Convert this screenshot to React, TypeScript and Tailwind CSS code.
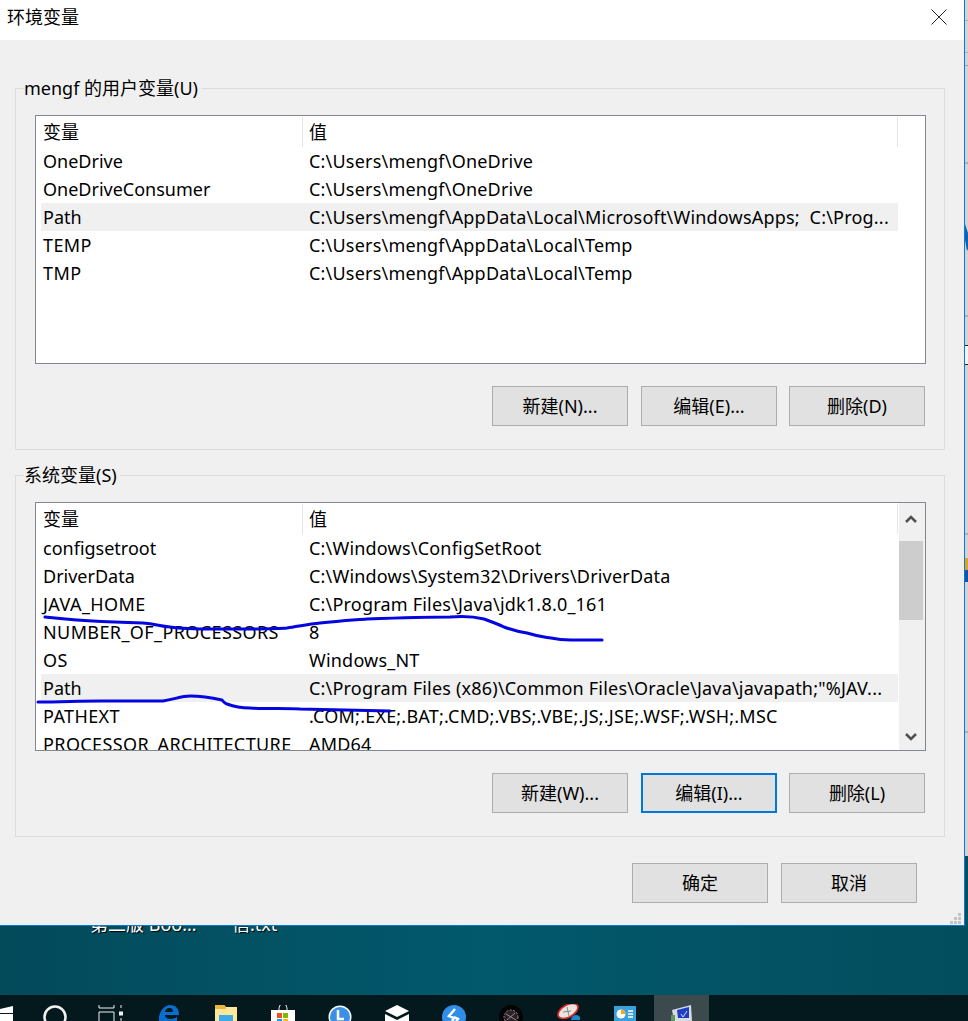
const font = { fontFamily: '"Noto Sans", "Noto Sans CJK SC", sans-serif' }

const userVars = [
  ['OneDrive', 'C:\\Users\\mengf\\OneDrive'],
  ['OneDriveConsumer', 'C:\\Users\\mengf\\OneDrive'],
  ['Path', 'C:\\Users\\mengf\\AppData\\Local\\Microsoft\\WindowsApps;  C:\\Prog...'],
  ['TEMP', 'C:\\Users\\mengf\\AppData\\Local\\Temp'],
  ['TMP', 'C:\\Users\\mengf\\AppData\\Local\\Temp'],
]

const systemVars = [
  ['configsetroot', 'C:\\Windows\\ConfigSetRoot'],
  ['DriverData', 'C:\\Windows\\System32\\Drivers\\DriverData'],
  ['JAVA_HOME', 'C:\\Program Files\\Java\\jdk1.8.0_161'],
  ['NUMBER_OF_PROCESSORS', '8'],
  ['OS', 'Windows_NT'],
  ['Path', 'C:\\Program Files (x86)\\Common Files\\Oracle\\Java\\javapath;"%JAV...'],
  ['PATHEXT', '.COM;.EXE;.BAT;.CMD;.VBS;.VBE;.JS;.JSE;.WSF;.WSH;.MSC'],
  ['PROCESSOR_ARCHITECTURE', 'AMD64'],
]

function VarList({ rows, scroll }: { rows: string[][]; scroll?: boolean }) {
  return (
    <div className="flex h-[249px] w-[891px] overflow-hidden border border-[#828790] bg-white">
      <div className="w-[863px] shrink-0 pl-[5px]">
        <div className="flex h-[31px] items-center">
          <div className="h-[30px] w-[262px] border-r border-[#e5e5e5] pl-[2px] leading-[30px]">变量</div>
          <div className="h-[30px] w-[595px] border-r border-[#e5e5e5] pl-[6px] leading-[30px]">值</div>
        </div>
        {rows.map(([name, value]) => (
          <div
            key={name}
            className={`flex h-[28px] w-[857px] items-center whitespace-pre ${name === 'Path' ? 'bg-[#f0f0f0]' : ''}`}
          >
            <div className={`w-[261px] shrink-0 pl-[2px] ${name === name.toUpperCase() ? 'tracking-[0.4px]' : ''}`}>{name}</div>
            <div className="pl-[7px] tracking-[0.2px]">{value}</div>
          </div>
        ))}
      </div>
      {scroll && (
        <div className="flex w-[26px] flex-col items-center bg-[#f0f0f0]">
          <div className="flex h-[38px] w-full justify-center pr-[2px] pt-[12px]">
            <svg width="12" height="8" viewBox="0 0 12 8" fill="none" stroke="#505050" strokeWidth="2.5">
              <path d="M1 7 6 2l5 5" />
            </svg>
          </div>
          <div className="mr-[2px] h-[79px] w-[24px] bg-[#cdcdcd]" />
          <div className="flex h-[130px] w-full items-end justify-center pb-[9px] pr-[2px]">
            <svg width="12" height="8" viewBox="0 0 12 8" fill="none" stroke="#505050" strokeWidth="2.5">
              <path d="M1 1l5 5 5-5" />
            </svg>
          </div>
        </div>
      )}
    </div>
  )
}

function Btn({ label, focused }: { label: string; focused?: boolean }) {
  return (
    <button
      className={`h-[40px] w-[136px] bg-[#e1e1e1] text-center ${focused ? 'border-2 border-[#0078d7]' : 'border border-[#adadad]'}`}
    >
      {label}
    </button>
  )
}

function Group({ title, children }: { title: string; children: React.ReactNode }) {
  return (
    <fieldset className="mx-[15px] h-[374px] w-[930px] border border-[#dcdcdc] pl-[19px]">
      <legend className="-ml-[11px] h-[24px] pr-[3px] leading-[24px]">{title}</legend>
      <div className="mt-[15px]">{children}</div>
    </fieldset>
  )
}

function TaskIcon({ active, children }: { active?: boolean; children: React.ReactNode }) {
  return (
    <div className={`mx-px flex h-[26px] w-[55px] shrink-0 justify-center pt-[10px] ${active ? 'bg-[#3c4a4d]' : ''}`}>
      {children}
    </div>
  )
}

function Taskbar() {
  return (
    <div className="flex h-[26px] overflow-hidden bg-[#04191e]">
      <div className="h-[26px] w-[26px] shrink-0 pt-[11px]">
        <svg width="13" height="15" viewBox="0 0 13 15" fill="#fff">
          <path d="M0 3 13 0v7H0zM0 8h13v7H0z" />
        </svg>
      </div>
      <TaskIcon>
        <svg width="24" height="24" viewBox="0 0 24 24" fill="none" stroke="#f2f2f2" strokeWidth="2.5">
          <circle cx="12" cy="12" r="10.5" />
        </svg>
      </TaskIcon>
      <TaskIcon>
        <svg width="26" height="16" viewBox="0 0 26 16" fill="none" stroke="#f2f2f2" className="-ml-[2px]">
          <path d="M1 0v3h15V0M1 16V7h15v9M23 0v3M23 13v3" />
          <rect x="21.5" y="7" width="3" height="3" fill="#f2f2f2" />
        </svg>
      </TaskIcon>
      <TaskIcon>
        <svg width="22" height="16" viewBox="0 0 22 16">
          <path
            d="M1 12C2 5 7 0 12 0c6 0 9 4 9 10H7c0 2 2 4 5 4 3 0 5-1 7-2v4H1zM7 7h8c0-3-1-4-4-4-2 0-4 2-4 4z"
            fill="#0a6ed1"
          />
        </svg>
      </TaskIcon>
      <TaskIcon>
        <svg width="22" height="16" viewBox="0 0 22 16">
          <path d="M0 0h9l2 2h11v14H0z" fill="#fde79b" />
          <path d="M0 0h9l2 2v2H0z" fill="#e6b63d" />
          <rect x="4" y="10" width="14" height="6" fill="#3fa9e8" />
        </svg>
      </TaskIcon>
      <TaskIcon>
        <svg width="24" height="16" viewBox="0 0 24 16">
          <path d="M8 5V3a4 4 0 0 1 8 0v2" fill="none" stroke="#e8e8e8" strokeWidth="1" />
          <rect x="0" y="5" width="24" height="11" fill="#fff" />
          <rect x="6" y="8" width="5" height="5" fill="#f25022" />
          <rect x="12" y="8" width="5" height="5" fill="#7fba00" />
          <rect x="6" y="14" width="5" height="2" fill="#00a4ef" />
          <rect x="12" y="14" width="5" height="2" fill="#ffb900" />
        </svg>
      </TaskIcon>
      <TaskIcon>
        <svg width="24" height="24" viewBox="0 0 24 24">
          <circle cx="12" cy="12" r="11.5" fill="#f4f8fc" />
          <circle cx="12" cy="12" r="10" fill="#3d8fe6" />
          <path d="M10 5v9h6" fill="none" stroke="#fff" strokeWidth="2.5" />
        </svg>
      </TaskIcon>
      <TaskIcon>
        <svg width="24" height="16" viewBox="0 0 24 16">
          <path d="M12 0 24 6 12 12 0 6z" fill="#fff" />
          <path d="M0 9 12 15 24 9v7H0z" fill="#fff" />
        </svg>
      </TaskIcon>
      <TaskIcon>
        <svg width="24" height="24" viewBox="0 0 24 24">
          <circle cx="12" cy="12" r="12" fill="#2f8fe8" />
          <path d="M13 4 7 11l5 2-2 3M12 12l4 2-3 4" fill="none" stroke="#fff" strokeWidth="2.5" />
        </svg>
      </TaskIcon>
      <TaskIcon>
        <svg width="24" height="24" viewBox="0 0 24 24">
          <circle cx="12" cy="12" r="12" fill="#050505" />
          <circle cx="12" cy="12" r="7" fill="#2a2226" stroke="#a08a94" strokeDasharray="2 1.5" />
          <path d="M7 9l10 6M8 15l8-7" stroke="#c9b4bf" strokeWidth="0.7" />
        </svg>
      </TaskIcon>
      <TaskIcon>
        <svg width="24" height="16" viewBox="0 0 24 16" className="-mt-[1px]">
          <ellipse cx="12" cy="7" rx="11" ry="6" fill="#e8e4e0" stroke="#d92b2b" strokeWidth="1.6" transform="rotate(-30 12 7)" />
          <path d="M11 3l2 9M7 8l8-1" stroke="#8a8a8a" />
          <circle cx="20" cy="16" r="5" fill="#1689c9" />
        </svg>
      </TaskIcon>
      <TaskIcon>
        <svg width="22" height="16" viewBox="0 0 22 16" className="mt-[1px]">
          <rect width="22" height="16" fill="#3aa0dc" />
          <circle cx="7" cy="8" r="4.5" fill="#fff" />
          <path d="M7 8V3.5A4.5 4.5 0 0 1 11.5 8z" fill="#f2a81d" />
          <path d="M14 5h5M14 8h5M14 11h5" stroke="#fff" strokeWidth="1.5" />
        </svg>
      </TaskIcon>
      <TaskIcon active>
        <svg width="22" height="16" viewBox="0 0 22 16">
          <path d="M1 5 20 0l1 16H3z" fill="#d8dce2" />
          <path d="M6 5l12-3v11H7z" fill="#1d3fc0" />
          <path d="M10 9l2 3 4-6" fill="none" stroke="#cfe0ff" />
          <rect x="0" y="10" width="4" height="6" fill="#5a9a5a" />
        </svg>
      </TaskIcon>
    </div>
  )
}

export default function App() {
  return (
    <div className="relative h-[1021px] w-[968px] overflow-hidden bg-[#024f61] text-[18px] text-black" style={font}>
      <div className="flex h-[926px]">
        {/* dialog */}
        <div className="relative h-[926px] w-[965px] shrink-0 border-r border-b border-[#0a78d7] bg-[#f0f0f0]">
          <div className="flex h-[40px] items-center justify-between bg-white pb-[6px] pl-[7px] pr-[17px]">
            <span>环境变量</span>
            <svg width="16" height="16" viewBox="0 0 16 16" stroke="#222" strokeWidth="1" fill="none">
              <path d="M0.5 0.5 15.5 15.5M15.5 0.5 0.5 15.5" />
            </svg>
          </div>

          <div className="pt-[36px]">
            <Group title="mengf 的用户变量(U)">
              <VarList rows={userVars} />
              <div className="mt-[22px] flex w-[890px] justify-end">
                <Btn label="新建(N)..." />
                <div className="w-[13px]" />
                <Btn label="编辑(E)..." />
                <div className="w-[12px]" />
                <Btn label="删除(D)" />
              </div>
            </Group>

            <div className="h-[13px]" />

            <Group title="系统变量(S)">
              <VarList rows={systemVars} scroll />
              <div className="mt-[22px] flex w-[890px] justify-end">
                <Btn label="新建(W)..." />
                <div className="w-[13px]" />
                <Btn label="编辑(I)..." focused />
                <div className="w-[12px]" />
                <Btn label="删除(L)" />
              </div>
            </Group>

            <div className="mt-[26px] flex justify-end gap-[13px] pr-[47px]">
              <Btn label="确定" />
              <Btn label="取消" />
            </div>
          </div>

          <svg className="absolute bottom-[1px] right-[3px]" width="11" height="11" viewBox="0 0 11 11" fill="#c4c4c4">
            <path d="M8 0h3v3H8zM4 4h3v3H4zM8 4h3v3H8zM0 8h3v3H0zM4 8h3v3H4zM8 8h3v3H8z" />
          </svg>
        </div>

        {/* window behind the dialog */}
        <div className="relative h-[856px] w-[3px] bg-[#d4d4d4]">
          <div className="absolute left-0 top-[20px] h-px w-full bg-[#b0b0b0]" />
          <div className="absolute left-0 top-[52px] h-px w-full bg-[#b0b0b0]" />
          <div className="absolute left-0 top-[65px] h-px w-full bg-[#a0a0a0]" />
          <div className="absolute left-0 top-[162px] h-[2px] w-full bg-[#b0b0b0]" />
          <svg className="absolute left-0 top-[224px]" width="3" height="27" viewBox="0 0 3 27" fill="#0b64b4">
            <path d="M0 0 3 9v16L2 27 0 16z" />
          </svg>
          <div className="absolute left-0 top-[315px] h-[2px] w-full bg-[#b0b0b0]" />
          <div className="absolute left-0 top-[345px] h-[20px] w-full border-y border-[#222] bg-[#f4f4f4]" />
          <div className="absolute left-0 top-[533px] h-[2px] w-full bg-[#b0b0b0]" />
          <div className="absolute left-0 top-[558px] h-[13px] w-full bg-[#e0a02a]" />
          <div className="absolute left-0 top-[570px] h-[12px] w-full bg-[#0b55ad]" />
          <div className="absolute left-0 top-[731px] h-[2px] w-full bg-[#b0b0b0]" />
        </div>
      </div>

      {/* desktop */}
      <div className="h-[69px] overflow-hidden bg-gradient-to-r from-[#034a5b] via-[#02596c] to-[#034d5e] text-white [text-shadow:1px_1px_1px_#000]">
        <div className="-mt-[15px] flex h-[26px] items-center whitespace-nowrap pl-[90px] leading-[26px]">
          <span className="w-[142px]">第二版 Boo...</span>
          <span>信.txt</span>
        </div>
      </div>

      <Taskbar />

      {/* pen marks over the list */}
      <svg className="absolute left-0 top-0" width="968" height="1021" fill="none" stroke="#0505e0" strokeWidth="3" strokeLinecap="round" strokeLinejoin="round">
        <path d="M45 617C70 620 100 622 143 623C155 624 160 626 170 627C190 630 215 629 233 629C255 629 275 629 287 628C300 626 310 624 320 623C340 621 355 620 367 619C395 618 425 617 450 617C462 616 472 616 484 619C495 623 500 625 504 627C515 631 520 632 527 633C540 637 545 637 551 638C560 640 565 640 571 640L602 640" />
        <path d="M38 702C60 702 80 701 100 701C125 701 150 701 163 701C175 699 182 696 190 696C203 696 213 698 222 700C224 703 225 703 227 704C235 707 242 708 250 708C270 709 285 708 300 709L390 711" />
      </svg>
    </div>
  )
}
